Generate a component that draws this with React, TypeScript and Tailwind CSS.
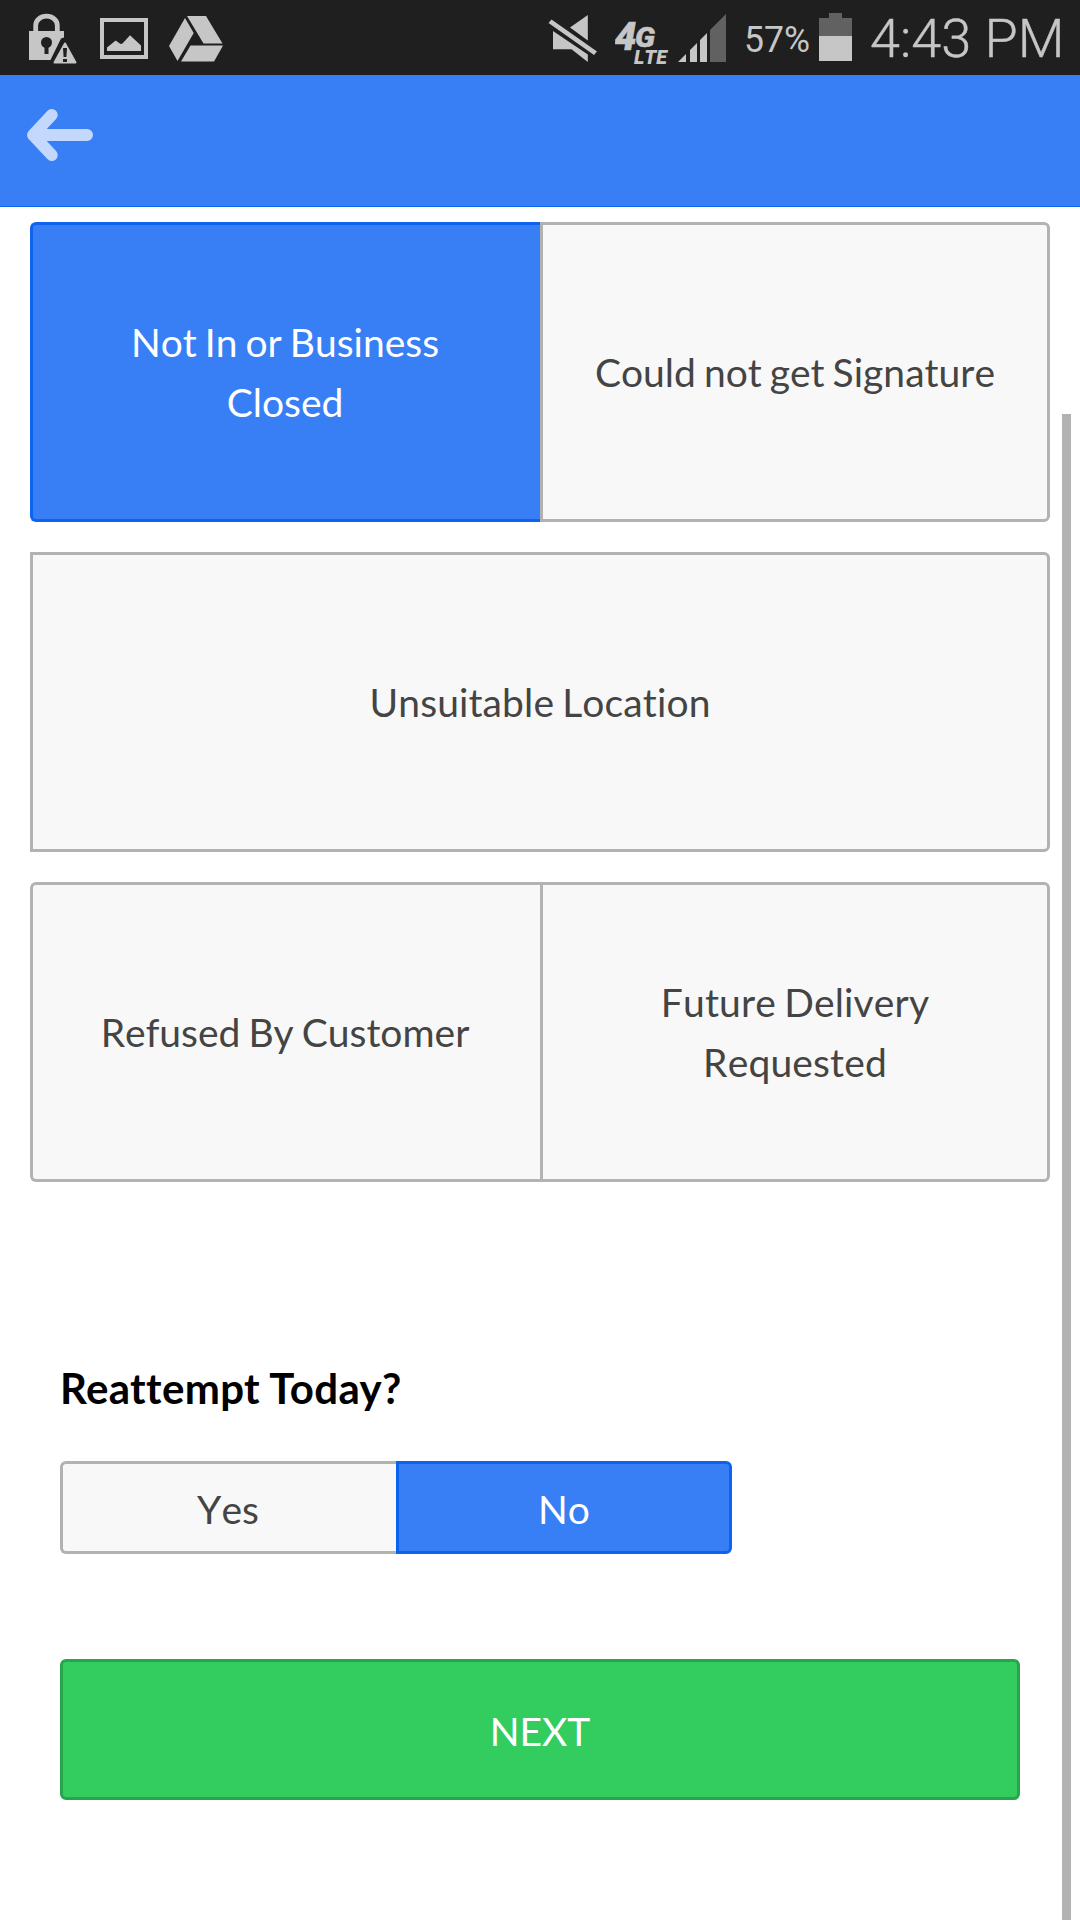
import React from "react";

const neutral = "border-[#b2b2b2] bg-[#f8f8f8] text-[#444444]";
const active = "border-[#0c63ee] bg-[#387ef5] text-white";

function Option({ className, children }: { className: string; children: React.ReactNode }) {
  return (
    <button className={`flex items-center justify-center border-3 text-center text-[39px] leading-[60px] [word-spacing:-2px] ${className}`}>
      {children}
    </button>
  );
}

function StatusBar() {
  return (
    <div className="flex h-[75px] items-start bg-[#1f1f1f] font-['Roboto'] text-[#c6c6c6]">
      {/* Lock with warning */}
      <svg className="ml-7 h-[75px] w-[50px] shrink-0" viewBox="28 0 50 75" fill="#c6c6c6">
        <path d="M35.700 32V25.500a10.800 9.300 0 0 1 21.600 0V32" fill="none" stroke="#c6c6c6" strokeWidth="4.800" />
        <path d="M29 31H64V37.500L61 38.500L50.500 60H29Z" />
        <circle cx="46.500" cy="42.500" r="5.500" fill="#1f1f1f" />
        <path d="M44.500 45h4v9h-4z" fill="#1f1f1f" />
        <path d="M65 43.500L75.500 62.500H54.500Z" stroke="#c6c6c6" strokeWidth="2" strokeLinejoin="round" />
        <path d="M63 48h4l-.6 9h-2.800zM63 59h4v3h-4z" fill="#1f1f1f" />
      </svg>
      {/* Picture */}
      <svg className="ml-[22px] h-[75px] w-12 shrink-0" viewBox="100 0 48 75" fill="#c6c6c6">
        <path fillRule="evenodd" d="M100 18h48v41h-48zM104 22v33h40v-33z" />
        <path d="M107 51V47.500L115.700 40.500L120.500 44L122.500 43.500L130 35.300L141 45.500V51Z" />
      </svg>
      {/* Drive */}
      <svg className="ml-[21px] h-[75px] w-[54px] shrink-0" viewBox="169 0 54 75" fill="#c6c6c6">
        <path d="M185 18L169 46L177.500 61L193.700 33Z" />
        <path d="M187 16H206L222.500 43.500H203.500Z" />
        <path d="M190.500 45.500H223L214 61.500H181Z" />
      </svg>
      <div className="flex-1" />
      {/* Muted speaker */}
      <svg className="h-[75px] w-[50px] shrink-0" viewBox="548 0 50 75" fill="#c6c6c6">
        <path d="M551.500 19.500L597 51.500L594 55L548.500 23Z" />
        <path d="M570 27.500L587.800 15V40.500Z" />
        <path d="M553 31L587.800 54.500V62L571.500 49.300H553Z" />
      </svg>
      {/* Network type */}
      <svg className="ml-[17px] h-[75px] w-[54px] shrink-0" viewBox="615 0 54 75" fill="#c6c6c6" stroke="#c6c6c6" fontFamily="Roboto" fontWeight="900" fontStyle="italic">
        <text x="614.500" y="49.500" fontSize="38" strokeWidth="0.500" textLength="22" lengthAdjust="spacingAndGlyphs">4</text>
        <text x="635" y="47" fontSize="27" strokeWidth="0.500" textLength="20" lengthAdjust="spacingAndGlyphs">G</text>
        <text x="634" y="63.700" fontSize="20.500" strokeWidth="0" textLength="33" lengthAdjust="spacingAndGlyphs">LTE</text>
      </svg>
      {/* Signal */}
      <svg className="ml-[9px] h-[75px] w-12 shrink-0" viewBox="678 0 48 75" fill="#c6c6c6">
        <path d="M678 62L686 54V62ZM690 50L697 43V62H690ZM700 40L707 33V62H700Z" />
        <path d="M710 30L726 14V62H710Z" fill="#616161" />
      </svg>
      <svg className="ml-[17px] h-[75px] w-[70px] shrink-0" viewBox="743 0 70 75" fill="#c6c6c6" fontFamily="Roboto">
        <text x="744" y="52" fontSize="36" textLength="66" lengthAdjust="spacingAndGlyphs">57%</text>
      </svg>
      {/* Battery */}
      <svg className="ml-[6px] h-[75px] w-[33px] shrink-0" viewBox="819 0 33 75">
        <path d="M829 13H842V18H852V36H819V18H829Z" fill="#616161" />
        <path d="M819 36H852V61H819Z" fill="#c6c6c6" />
      </svg>
      <svg className="mr-[10px] ml-[16px] h-[75px] w-[202px] shrink-0" viewBox="868 0 202 75" fill="#c6c6c6" stroke="#c6c6c6" strokeWidth="0.400" fontFamily="Roboto" fontWeight="300">
        <text x="870" y="57" fontSize="54" textLength="194.500" lengthAdjust="spacingAndGlyphs">4:43 PM</text>
      </svg>
    </div>
  );
}

export default function App() {
  return (
    <div className="relative h-[1920px] w-[1080px] overflow-hidden bg-white font-['Lato',sans-serif] [font-kerning:none] [font-variant-ligatures:none]">
      <StatusBar />
      <header className="h-[132px] border-b border-[#0c63ee] bg-[#387ef5]">
        <button aria-label="Back" className="ml-[27px] block">
          <svg className="h-[120px] w-[66px]" viewBox="27 75 66 120" fill="none" stroke="#c3d8fc" strokeWidth="12" strokeLinecap="round" strokeLinejoin="round">
            <path d="M87 135H36M51.700 115L33 135L51.700 155" />
          </svg>
        </button>
      </header>
      <main className="flex flex-col px-[30px] pt-[15px]">
        <div className="flex h-[300px]">
          <Option className={`w-[510px] rounded-l-md border-r-0 pr-[83px] pl-20 ${active}`}>Not In or Business Closed</Option>
          <Option className={`w-[510px] rounded-r-md ${neutral}`}>Could not get Signature</Option>
        </div>
        <div className="mt-[30px] flex h-[300px]">
          <Option className={`w-full rounded-r-md tracking-[0.12px] ${neutral}`}>Unsuitable Location</Option>
        </div>
        <div className="mt-[30px] flex h-[300px]">
          <Option className={`w-[510px] rounded-l-md border-r-0 pr-[3px] ${neutral}`}>Refused By Customer</Option>
          <Option className={`w-[510px] rounded-r-md px-20 tracking-[0.15px] ${neutral}`}>Future Delivery Requested</Option>
        </div>
        <section className="px-[30px] pt-[176px]">
          <h2 className="h-[60px] text-[42px] leading-[60px] font-bold tracking-[0.35px] text-black [font-kerning:normal]">Reattempt Today?</h2>
          <div className="mt-[43px] flex h-[93px] w-[672px]">
            <Option className={`w-1/2 rounded-l-md border-r-0 pt-0.5 pr-[3px] ${neutral}`}>Yes</Option>
            <Option className={`w-1/2 rounded-r-md pt-0.5 ${active}`}>No</Option>
          </div>
          <Option className="mt-[105px] h-[141px] w-full rounded-md border-[#28a54c] bg-[#33cd5f] pt-0.5 text-white">NEXT</Option>
        </section>
      </main>
      {/* Scroll indicator laid over the content */}
      <div className="absolute top-[414px] right-[9px] bottom-0 w-[9px] bg-[#b2b2b2]" />
    </div>
  );
}
